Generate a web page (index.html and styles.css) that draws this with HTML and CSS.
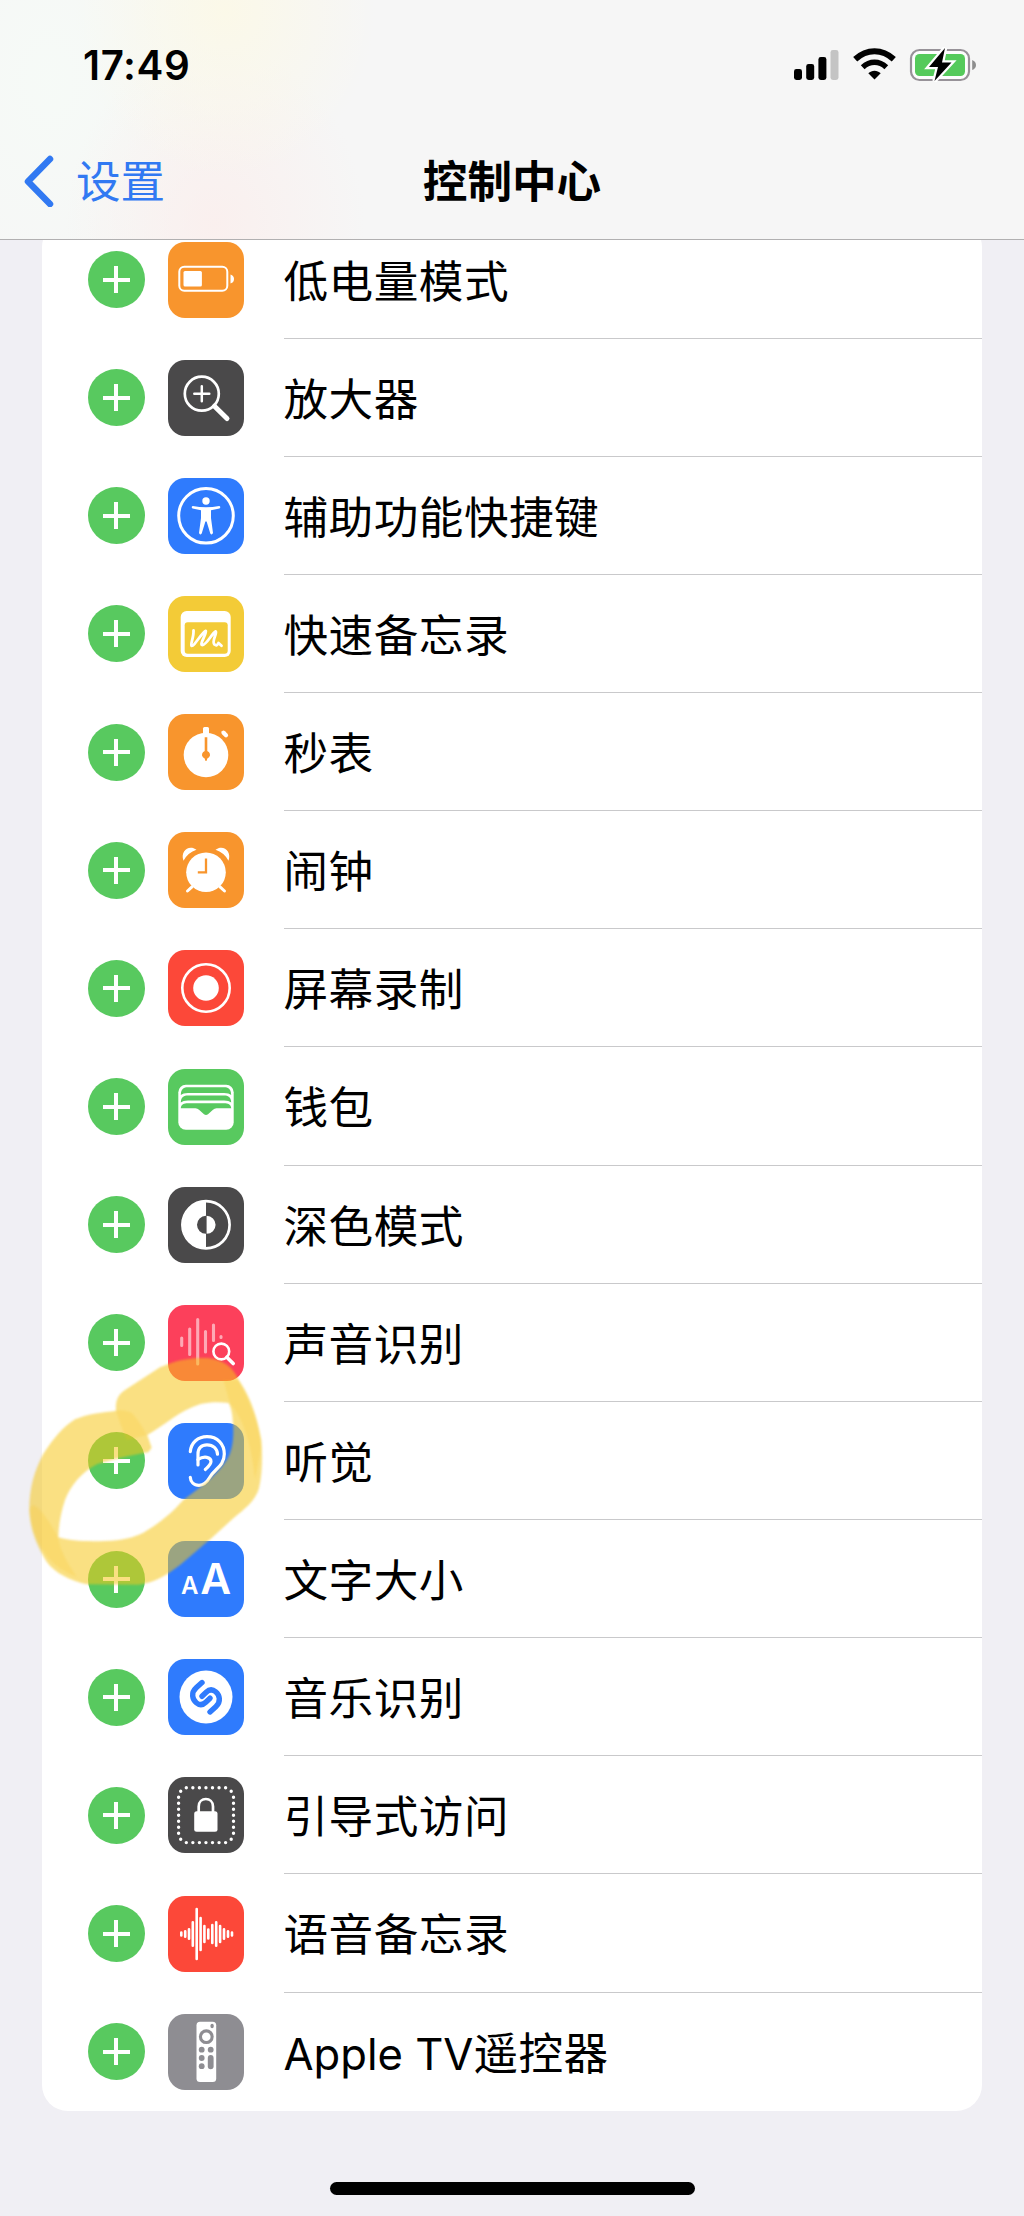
FILE: index.html
```html
<!DOCTYPE html>
<html lang="zh-CN">
<head>
<meta charset="utf-8">
<title>控制中心</title>
<link rel="stylesheet" href="styles.css">
</head>
<body>
<header class="header">
  <div class="status">
    <span class="time">17:49</span>
    <svg class="status-icons" width="184" height="36" viewBox="0 0 184 36">
      <rect x="2" y="22" width="8" height="11" rx="2.4"/>
      <rect x="14.2" y="17" width="8" height="16" rx="2.4"/>
      <rect x="26.4" y="10" width="8" height="23" rx="2.4"/>
      <rect x="38.5" y="3" width="8" height="30" rx="2.4" fill="#c4c4c4"/>
      <g fill="none" stroke="#000">
        <path d="M63.200 12.300C74.800 1.600 90.200 1.600 101.800 12.300" stroke-width="6"/>
        <path d="M70.700 20.300C77.800 13.700 87.200 13.700 94.300 20.300" stroke-width="5.500"/>
      </g>
      <path d="M76.300 26.300C79.800 22.900 85.200 22.900 88.700 26.300L82.500 32.600Z"/>
      <rect x="119" y="3" width="58" height="30" rx="8.500" fill="#fdfdfd" stroke="#979298" stroke-width="2.200"/>
      <rect x="123" y="7" width="50" height="22" rx="4.500" fill="#55ca5b"/>
      <path d="M180.200 13Q184 14.500 184 18T180.200 23Z" fill="#8d8d8d"/>
      <path d="M153 1L137 20H146L142.500 34L159.500 15.500H150Z" stroke="#fff" stroke-width="4.500"/>
      <path d="M153 1L137 20H146L142.500 34L159.500 15.500H150Z"/>
    </svg>
  </div>
  <nav class="nav">
    <a class="back"><svg width="32" height="52" viewBox="0 0 32 52"><path d="M27 4L5 26.500L27 49"/></svg>设置</a>
    <h1 class="title">控制中心</h1>
  </nav>
</header>
<main class="content">
  <ul class="card">
    <li class="row"><i class="add"></i>
      <svg class="icon orange" viewBox="0 0 76 76"><rect class="line" x="11.300" y="24.800" width="48" height="24" rx="5" stroke-width="2"/><rect x="15.500" y="29" width="18.400" height="15.500" rx="1.500"/><path d="M62.500 32.500Q66 33.500 66 37T62.500 41.500Z"/></svg>
      <span class="label">低电量模式</span></li>
    <li class="row"><i class="add"></i>
      <svg class="icon dark" viewBox="0 0 76 76"><g class="line"><circle cx="33.800" cy="33.700" r="17" stroke-width="2.700"/><path d="M26.300 33.700H41.300M33.800 26.200V41.200" stroke-width="2.500"/><path d="M46.500 46.200L59 58.500" stroke-width="5"/></g></svg>
      <span class="label">放大器</span></li>
    <li class="row"><i class="add"></i>
      <svg class="icon blue" viewBox="0 0 76 76"><circle class="line" cx="38" cy="37.800" r="27.300" stroke-width="3"/><circle cx="38" cy="23" r="3.700"/><path d="M24.800 28.100Q38 30.500 51.200 28.100Q53.300 29 51.500 30.400L43 32.200V40L45 55Q43.800 57.500 42.300 55.500L38.600 43.500H37.400L33.700 55.500Q32 57.500 31 55L33 40V32.200L24.500 30.400Q22.700 29 24.800 28.100Z"/></svg>
      <span class="label">辅助功能快捷键</span></li>
    <li class="row"><i class="add"></i>
      <svg class="icon yellow" viewBox="0 0 76 76"><rect x="12.700" y="15" width="50" height="46" rx="6"/><rect class="hole" x="16.700" y="26.300" width="43" height="31.400" rx="3"/><path class="line" d="M25.500 34.300C26 41 22 49 23.500 49.800C26 51 34 36 37.800 34.800C39 37 31.500 48 34 49C38 50 44 37 47.800 35.400C49.500 37 43 46 46.500 48.500Q49 50.500 50.500 47L53.500 49.800" stroke-width="2.800"/></svg>
      <span class="label">快速备忘录</span></li>
    <li class="row"><i class="add"></i>
      <svg class="icon orange" viewBox="0 0 76 76"><circle cx="38" cy="41" r="22.300"/><rect x="35" y="13" width="6" height="9" rx="1.500"/><path class="line" d="M55.500 18.800L58 21.300" stroke-width="4.200"/><path class="cut" d="M38 23.200V41" stroke-width="2.600"/><path class="hole" d="M38 37A4 4 0 0 1 42 41.500Q41.500 43.500 39.300 44.500Q39 47 38 47Q37 47 36.700 44.500Q34.500 43.500 34 41.500A4 4 0 0 1 38 37Z"/></svg>
      <span class="label">秒表</span></li>
    <li class="row"><i class="add"></i>
      <svg class="icon orange" viewBox="0 0 76 76"><circle cx="38" cy="40.300" r="19.800"/><path d="M15.500 28.700C12 19 21 12 28.500 17.800Q20 20.500 15.500 28.700ZM60.500 28.700C64 19 55 12 47.500 17.800Q56 20.500 60.500 28.700Z"/><path class="line" d="M19.500 59L24 54.800M56.500 59L52 54.800" stroke-width="3"/><path class="cut" d="M38 26.500V40.300H29.800" stroke-width="2.300"/></svg>
      <span class="label">闹钟</span></li>
    <li class="row"><i class="add"></i>
      <svg class="icon red" viewBox="0 0 76 76"><circle class="line" cx="38" cy="38" r="23.700" stroke-width="2.600"/><circle cx="38" cy="38" r="12.800"/></svg>
      <span class="label">屏幕录制</span></li>
    <li class="row"><i class="add"></i>
      <svg class="icon green" viewBox="0 0 76 76"><rect x="10.300" y="15.700" width="55.400" height="45" rx="7.500"/><path class="hole" d="M12.800 26C13 19.500 16 18.300 20 18.300H56C60 18.300 63 19.500 63.200 26Q61 24 56 24H20Q15 24 12.800 26ZM12.800 33.500C13 28 16 26.600 20 26.600H56C60 26.600 63 28 63.200 33.500Q61 31.500 56 31.500H20Q15 31.500 12.800 33.500ZM12.800 39.200C13 35.500 16 34.300 20 34.300H56C60 34.300 63 35.500 63.200 39.200H48.500Q46.500 39.200 45 40.700L40 45.200Q38 46.800 36 45.200L31 40.700Q29.500 39.200 27.500 39.200Z"/></svg>
      <span class="label">钱包</span></li>
    <li class="row"><i class="add"></i>
      <svg class="icon dark" viewBox="0 0 76 76"><circle class="line" cx="38" cy="37.800" r="23.600" stroke-width="2.700"/><path d="M38 13.500A24.300 24.300 0 0 0 38 62.100V46.800A9 9 0 0 1 38 28.800ZM38.600 28.800A9 9 0 0 1 38.600 46.800Z"/></svg>
      <span class="label">深色模式</span></li>
    <li class="row"><i class="add"></i>
      <svg class="icon pink" viewBox="0 0 76 76"><path class="line" stroke="#fff" stroke-opacity=".55" stroke-width="3.100" d="M13.700 33V40.500M21.700 24V49.500M29.700 14.500V59M37.500 26.500V47M45.500 20V35.500M53 31.500V32.500"/><circle class="hole" cx="53.300" cy="46.500" r="10.200"/><path class="line" d="M58.800 52.200L65.200 58.600" stroke-width="3.600"/><circle class="line" cx="53.300" cy="46.500" r="7.900" stroke-width="2.600"/></svg>
      <span class="label">声音识别</span></li>
    <li class="row"><i class="add"></i>
      <svg class="icon blue" viewBox="0 0 76 76"><g class="line" stroke-width="3.200"><path d="M22.300 28.700C23 19.500 30 13.600 39 13.600C49.500 13.600 56.300 21 56.300 31C56.300 43 46.500 46 42 54C38.500 60 34.500 62.300 31 62.300C25.500 62.300 22.500 58.500 22.300 54.300"/><path d="M30 42V31C30 25 33.500 21.800 39 21.800C45 21.800 49.300 25.500 49.500 31.200"/><path d="M30 36.500C36 32.500 43 34 43 38.500C43 41.500 40 44 37.300 46.500"/></g></svg>
      <span class="label">听觉</span></li>
    <li class="row"><i class="add"></i>
      <svg class="icon blue" viewBox="0 0 76 76"><text class="glyph" x="13" y="52.700" font-size="24">A</text><text class="glyph" x="32.300" y="52.700" font-size="42.500">A</text></svg>
      <span class="label">文字大小</span></li>
    <li class="row"><i class="add"></i>
      <svg class="icon blue" viewBox="0 0 76 76"><circle cx="38" cy="38" r="26.500"/><path class="cut round" stroke-width="5.400" d="M34 23.500L28.200 28.800C22.500 34 24.500 40.500 28.300 43.700C31.800 46.700 35 46 37.800 43.300L42 39.200M42 53L47.800 47.700C53.500 42.500 51.500 36 47.700 32.800C44.200 29.800 41 30.500 38.200 33.200L34 37.300"/></svg>
      <span class="label">音乐识别</span></li>
    <li class="row"><i class="add"></i>
      <svg class="icon dark" viewBox="0 0 76 76"><g class="line" stroke-width="3.400"><path stroke-dasharray="0 6.550" d="M18.300 10.800H58M18.300 65.600H58"/><path stroke-dasharray="0 6" d="M10.600 20.300V57M65.500 20.300V57"/><path d="M12.700 14.300h0M63.200 14.300h0M12.700 62.200h0M63.200 62.200h0"/></g><rect x="26.200" y="34.300" width="23.300" height="20.500" rx="2.500"/><path class="line" d="M30.700 36V29.500C30.700 19.500 45 19.500 45 29.500V36" stroke-width="2.700"/></svg>
      <span class="label">引导式访问</span></li>
    <li class="row"><i class="add"></i>
      <svg class="icon red" viewBox="0 0 76 76"><path class="line" stroke-width="2.600" d="M13.300 36.600V39.400M17.200 35.300V40.700M21 33.300V42.700M24.800 26.300V49.700M28.700 13V63M32.600 22V54M36.400 30V46M40.300 33.500V42.500M44.300 29V47M48.200 26.300V49.700M52.100 30V46M56 33.300V42.700M60 35.300V40.700M64 36.600V39.400"/></svg>
      <span class="label">语音备忘录</span></li>
    <li class="row"><i class="add"></i>
      <svg class="icon gray" viewBox="0 0 76 76"><rect x="28.500" y="7.700" width="19.700" height="60.300" rx="3.500"/><g class="hole"><circle cx="38.300" cy="22.700" r="7.400"/><rect x="42.500" y="9.800" width="3.200" height="4.400" rx="1.600"/><circle cx="33.700" cy="35.700" r="2.900"/><circle cx="42.700" cy="35.700" r="2.900"/><circle cx="33.700" cy="44" r="2.900"/><circle cx="33.700" cy="52.200" r="2.900"/><rect x="39.800" y="41" width="5.800" height="14.200" rx="2.900"/></g><circle cx="38.300" cy="22.700" r="4.300"/></svg>
      <span class="label"><span class="latin">Apple TV</span>遥控器</span></li>
  </ul>
</main>
<div class="home"></div>
<!-- highlighter stroke drawn over the list -->
<svg class="marker" viewBox="0 0 780 960">
  <path fill="#f6c61a" fill-opacity=".545" fill-rule="evenodd" d="M318 392C316 365 322 345 345 330L450 262C500 240 540 233 590 234C640 238 670 262 686 300C728 360 745 430 754 480C758 530 757 580 747 625C735 665 700 690 670 715C610 770 570 805 510 855C465 890 430 908 385 914L230 913C180 900 135 880 110 845C80 795 60 750 58 690C58 620 75 570 98 525C130 475 160 440 195 418C235 400 280 398 318 392ZM412 465L425 503L415 517C370 524 310 538 262 552C215 575 180 620 165 660C152 700 146 735 145 772C180 783 230 785 285 783C335 781 370 773 400 758C440 735 480 705 520 660C560 630 620 590 650 540C668 515 672 470 669 430C667 400 664 385 656 369C630 366 600 366 572 372C510 390 465 435 412 465Z"/>
  <g fill="#f8c420" fill-opacity=".2"><path d="M318 392Q340 388 365 398Q390 425 410 465L350 480Q330 430 318 392Z"/><path d="M640 300L686 300Q748 420 754 500L735 600Q720 440 660 370Z"/><path d="M58 690Q70 640 145 772Q150 820 200 890Q80 850 58 690Z"/></g>
</svg>
</body>
</html>
```
FILE: styles.css
```css
* { box-sizing: border-box; }
body {
  margin: 0;
  width: 1024px;
  height: 2216px;
  position: relative;
  display: flex;
  flex-direction: column;
  overflow: hidden;
  background: #f0eff4;
  color: #000;
  font-family: Inter, "Noto Sans CJK SC", sans-serif;
}
.header {
  flex: none;
  height: 240px;
  border-bottom: 1px solid #b1b0b1;
  background:
    radial-gradient(ellipse 150px 170px at 225px 10px, rgba(252, 249, 230, .85), rgba(252, 249, 230, 0)),
    radial-gradient(ellipse 150px 180px at 215px 225px, rgba(251, 238, 236, .8), rgba(251, 238, 236, 0)),
    radial-gradient(ellipse 180px 260px at 50px 80px, rgba(246, 251, 247, .9), rgba(246, 250, 247, 0)),
    #f6f6f6;
}
.status {
  height: 122px;
  padding: 0 48px 0 83px;
  display: flex;
  justify-content: space-between;
}
.time {
  padding-top: 41px;
  font-size: 40.3px;
  line-height: 50px;
  font-weight: 600;
  letter-spacing: .6px;
}
.status-icons { margin-top: 47px; }
.nav {
  height: 119px;
  display: grid;
  grid-template-columns: 1fr auto 1fr;
  align-items: center;
  font-size: 44.6px;
  line-height: 60px;
}
.back {
  display: flex;
  align-items: center;
  gap: 21px;
  padding-left: 23px;
  color: #3179f2;
}
.back svg {
  margin-top: -2px;
  fill: none;
  stroke: #3179f2;
  stroke-width: 6.5;
  stroke-linecap: round;
  stroke-linejoin: round;
}
.title {
  margin: 0;
  font-size: inherit;
  font-weight: 600;
}
.content {
  flex: none;
  height: 1872px;
  padding: 0 42px;
  overflow: hidden;
}
.card {
  list-style: none;
  margin: -19.5px 0 0;
  padding: 0 0 0 42px;
  border-radius: 26px;
  overflow: hidden;
  background: #fff;
}
.row {
  display: flex;
  align-items: center;
  height: 118.15px;
}
.add {
  flex: none;
  width: 57px;
  height: 57px;
  margin: 0 23.5px 0 3.5px;
  border-radius: 50%;
  background:
    linear-gradient(#fff, #fff) center / 27px 4px no-repeat,
    linear-gradient(#fff, #fff) center / 4px 27px no-repeat,
    #58c95f;
}
.icon {
  flex: none;
  width: 76px;
  height: 76px;
  margin-right: 39.5px;
  border-radius: 17px;
  fill: #fff;
  background: var(--tile);
}
.orange { --tile: #f8952d; }
.dark { --tile: #4a494a; }
.blue { --tile: #2f7bfd; }
.yellow { --tile: #f3cb37; }
.red { --tile: #fc4839; }
.green { --tile: #58c95f; }
.pink { --tile: #fc405b; }
.gray { --tile: #8e8d92; }
.line {
  fill: none;
  stroke: #fff;
  stroke-linecap: round;
  stroke-linejoin: round;
}
.hole { fill: var(--tile); stroke: none; }
.cut { fill: none; stroke: var(--tile); }
.round { stroke-linecap: round; stroke-linejoin: round; }
.glyph { font-family: Inter, sans-serif; font-weight: 600; }
.label {
  flex: 1;
  align-self: stretch;
  padding-top: 3px;
  border-bottom: 1px solid #c9c9cb;
  font-size: 44.6px;
  letter-spacing: .5px;
  line-height: 117px;
  white-space: nowrap;
}
.latin {
  font-size: 43.6px;
  letter-spacing: 0;
}
.row:last-child .label { border-bottom: 0; }
.home {
  width: 365px;
  height: 13px;
  margin: 70px auto 0;
  border-radius: 7px;
  background: #000;
}
.marker {
  position: absolute;
  left: 10px;
  top: 1280px;
  width: 260px;
  height: 320px;
  filter: blur(.8px);
}
```
